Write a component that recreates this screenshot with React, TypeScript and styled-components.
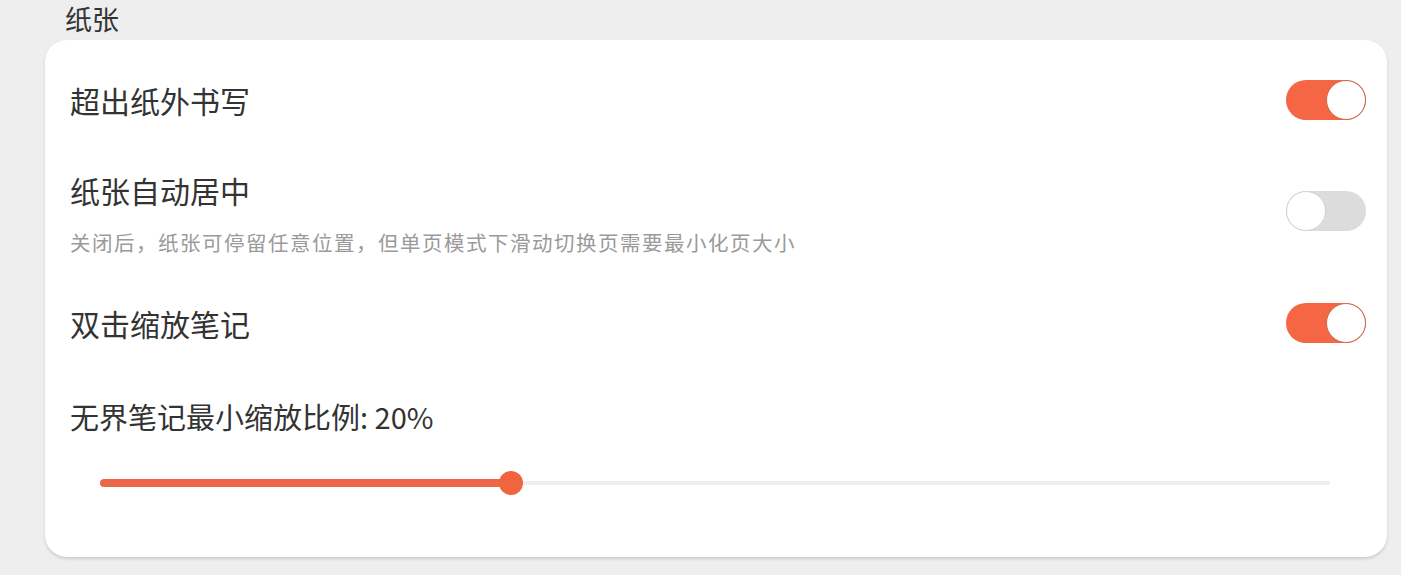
import React, { useState } from 'react';
import styled, { createGlobalStyle } from 'styled-components';

const GlobalStyle = createGlobalStyle`
    html, body {
        margin: 0;
        padding: 0;
        background: #eeeeee;
        font-family: "Noto Sans CJK SC", "Noto Sans", sans-serif;
        color: #333333;
    }
`;

const Page = styled.div`
    width: 1401px;
    height: 575px;
    overflow: hidden;
    background: #eeeeee;
`;

const SectionTitle = styled.div`
    height: 40px;
    padding-left: 65px;
    font-size: 27px;
    line-height: 38px;
    color: #333;
`;

const Card = styled.div`
    margin-left: 45px;
    width: 1342px;
    height: 517px;
    background: #ffffff;
    border-radius: 22px;
    box-shadow: 0 2px 3px rgba(0, 0, 0, 0.14);
    display: flex;
    flex-direction: column;
    box-sizing: border-box;
    padding: 0 21px 0 25px;
`;

const Row = styled.div<{ $height?: number; $pt?: number; $pb?: number }>`
    display: flex;
    align-items: center;
    justify-content: space-between;
    ${(p) => (p.$height ? `height: ${p.$height}px;` : '')}
    padding-top: ${(p) => p.$pt ?? 0}px;
    padding-bottom: ${(p) => p.$pb ?? 0}px;
`;

const TextCol = styled.div`
    display: flex;
    flex-direction: column;
`;

const Label = styled.div`
    font-size: 30px;
    line-height: 40px;
    color: #333;
`;

const Desc = styled.div`
    margin-top: 17px;
    font-size: 20.5px;
    line-height: 30px;
    letter-spacing: 1.5px;
    color: #9a9a9a;
`;

const Track = styled.button<{ $on: boolean }>`
    position: relative;
    width: 80px;
    height: 40px;
    border-radius: 20px;
    border: none;
    padding: 0;
    cursor: pointer;
    background: ${(p) => (p.$on ? '#f46644' : '#dcdcdc')};
    margin-top: ${(p) => (p.$on ? 0 : -6)}px;
`;

const Knob = styled.span<{ $on: boolean }>`
    position: absolute;
    top: 0;
    left: ${(p) => (p.$on ? 40 : 0)}px;
    width: 40px;
    height: 40px;
    box-sizing: border-box;
    border-radius: 50%;
    background: #fff;
    border: 1.5px solid ${(p) => (p.$on ? '#c9694f' : '#d2d2d2')};
`;

const SliderLabel = styled.div`
    margin-top: 30px;
    font-size: 29px;
    line-height: 40px;
    color: #333;
`;

const SliderWrap = styled.div`
    position: relative;
    margin: 35px 36px 0 30px;
    height: 24px;
`;

const Rail = styled.div`
    position: absolute;
    left: 0;
    right: 0;
    top: 10px;
    height: 4px;
    border-radius: 2px;
    background: #eeeeee;
`;

const Fill = styled.div`
    position: absolute;
    left: 0;
    top: 8px;
    height: 8px;
    border-radius: 4px;
    background: #ec6748;
`;

const Thumb = styled.div`
    position: absolute;
    top: 0;
    width: 24px;
    height: 24px;
    margin-left: -12px;
    border-radius: 50%;
    background: #f0643f;
`;

const Toggle: React.FC<{ on: boolean; onChange: (v: boolean) => void }> = ({ on, onChange }) => (
    <Track $on={on} onClick={() => onChange(!on)}>
        <Knob $on={on} />
    </Track>
);

export default function App() {
    const [overflow, setOverflow] = useState(true);
    const [center, setCenter] = useState(false);
    const [dblZoom, setDblZoom] = useState(true);
    const pct = 33.4;

    return (
        <Page>
            <GlobalStyle />
            <SectionTitle>纸张</SectionTitle>
            <Card>
                <Row $height={120}>
                    <Label>超出纸外书写</Label>
                    <Toggle on={overflow} onChange={setOverflow} />
                </Row>
                <Row $pt={10} $pb={23}>
                    <TextCol>
                        <Label>纸张自动居中</Label>
                        <Desc>关闭后，纸张可停留任意位置，但单页模式下滑动切换页需要最小化页大小</Desc>
                    </TextCol>
                    <Toggle on={center} onChange={setCenter} />
                </Row>
                <Row $height={86}>
                    <Label>双击缩放笔记</Label>
                    <Toggle on={dblZoom} onChange={setDblZoom} />
                </Row>
                <SliderLabel>无界笔记最小缩放比例: 20%</SliderLabel>
                <SliderWrap>
                    <Rail />
                    <Fill style={{ width: `${pct}%` }} />
                    <Thumb style={{ left: `${pct}%` }} />
                </SliderWrap>
            </Card>
        </Page>
    );
}
